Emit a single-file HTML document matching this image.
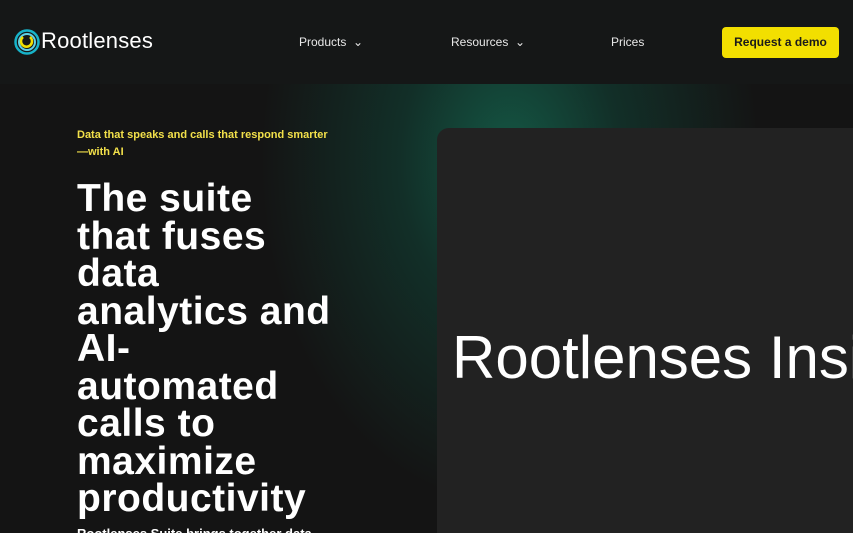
<!DOCTYPE html>
<html><head><style>
*{margin:0;padding:0;box-sizing:border-box}
html,body{width:853px;height:533px;overflow:hidden}
body{background:#141414;font-family:"Liberation Sans",sans-serif;position:relative;color:#fff}
.wrap{position:absolute;left:0;top:0;width:853px;height:533px;overflow:hidden}
.glow{position:absolute;left:250px;top:40px;width:520px;height:480px;background:radial-gradient(ellipse at 50% 25%,rgba(20,110,85,.75) 0%,rgba(16,80,64,.45) 30%,rgba(20,20,20,0) 68%)}
.header{position:absolute;left:0;top:0;width:853px;height:84px;background:#151717}
.logo{position:absolute;left:14px;top:29px}
.logotext{position:absolute;left:41px;top:28px;font-size:22px;color:#fff;letter-spacing:.2px}
.nav{position:absolute;top:35px;font-size:12px;color:#e8e8e8}
.btn{position:absolute;left:722px;top:27px;width:117px;height:31px;background:#f2df00;border-radius:4px;color:#1a1a1a;font-size:12px;font-weight:bold;text-align:center;line-height:31px}
.tag{position:absolute;left:77px;top:127px;font-size:11px;font-weight:bold;color:#f2e04a;line-height:17px;white-space:nowrap}
h1{position:absolute;left:77px;top:180px;font-size:39px;line-height:37.5px;font-weight:bold;color:#fff;letter-spacing:.5px;white-space:nowrap}
.sub{position:absolute;left:77px;top:526px;font-size:13px;font-weight:bold;color:#fff}
.panel{position:absolute;left:437px;top:128px;width:440px;height:420px;background:#222;border-radius:12px}
.big{position:absolute;left:452px;top:323px;font-size:60px;color:#fff;white-space:nowrap}
</style></head><body><div class="wrap">
<div class="glow"></div>
<div class="header"></div>
<svg class="logo" width="26" height="26" viewBox="0 0 26 26"><circle cx="13" cy="13" r="11.5" fill="none" stroke="#17b3c9" stroke-width="2.5"/><circle cx="13" cy="13" r="8" fill="none" stroke="#5fd0e6" stroke-width="2"/><path d="M9 8a5.5 5.5 0 1 0 7 0" fill="none" stroke="#f2df00" stroke-width="2.5"/></svg>
<div class="logotext">Rootlenses</div>
<div class="nav" style="left:299px">Products &nbsp;⌄</div>
<div class="nav" style="left:451px">Resources &nbsp;⌄</div>
<div class="nav" style="left:611px">Prices</div>
<div class="btn">Request a demo</div>
<div class="tag">Data that speaks and calls that respond smarter<br>—with AI</div>
<h1>The suite<br>that fuses<br>data<br>analytics and<br>AI-<br>automated<br>calls to<br>maximize<br>productivity</h1>
<div class="sub">Rootlenses Suite brings together data</div>
<div class="panel"></div>
<div class="big">Rootlenses Insights</div>
</div></body></html>
